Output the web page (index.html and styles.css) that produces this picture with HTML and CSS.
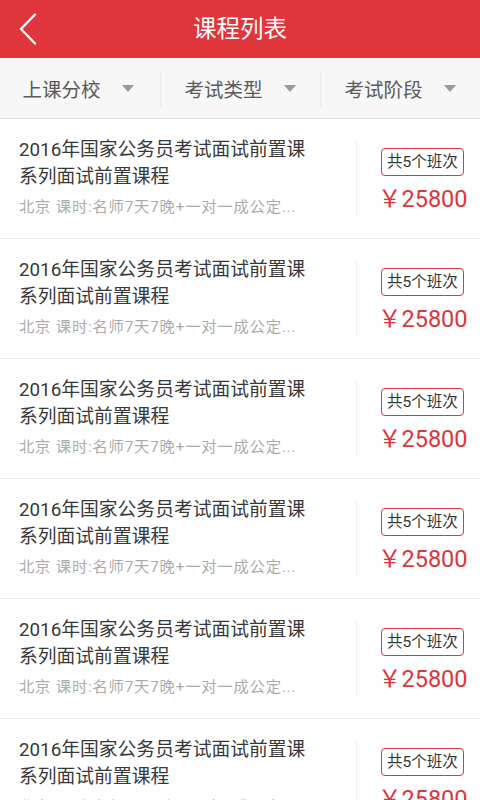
FILE: index.html
```html
<!DOCTYPE html>
<html lang="zh">
<head>
<meta charset="utf-8">
<link rel="stylesheet" href="styles.css">
</head>
<body>
<div class="app">
  <header class="topbar">
    <span class="back">
      <svg width="20" height="32" viewBox="0 0 20 32"><path d="M17 1.5 L3 16 L17 30.5" fill="none" stroke="#fff" stroke-width="2.4" stroke-linecap="round" stroke-linejoin="round"/></svg>
    </span>
    <h1 class="title">课程列表</h1>
  </header>
  <nav class="filters">
    <div class="filter first"><span>上课分校</span><i class="arrow"></i></div>
    <div class="filter"><span>考试类型</span><i class="arrow"></i></div>
    <div class="filter"><span>考试阶段</span><i class="arrow"></i></div>
  </nav>
  <ul class="list">
    <li class="item">
      <div class="info">
        <p class="name">2016年国家公务员考试面试前置课系列面试前置课程</p>
        <p class="desc">北京 课时:名师7天7晚+一对一成公定...</p>
      </div>
      <div class="side"><span class="badge">共5个班次</span><span class="price">￥25800</span></div>
    </li>
    <li class="item">
      <div class="info">
        <p class="name">2016年国家公务员考试面试前置课系列面试前置课程</p>
        <p class="desc">北京 课时:名师7天7晚+一对一成公定...</p>
      </div>
      <div class="side"><span class="badge">共5个班次</span><span class="price">￥25800</span></div>
    </li>
    <li class="item">
      <div class="info">
        <p class="name">2016年国家公务员考试面试前置课系列面试前置课程</p>
        <p class="desc">北京 课时:名师7天7晚+一对一成公定...</p>
      </div>
      <div class="side"><span class="badge">共5个班次</span><span class="price">￥25800</span></div>
    </li>
    <li class="item">
      <div class="info">
        <p class="name">2016年国家公务员考试面试前置课系列面试前置课程</p>
        <p class="desc">北京 课时:名师7天7晚+一对一成公定...</p>
      </div>
      <div class="side"><span class="badge">共5个班次</span><span class="price">￥25800</span></div>
    </li>
    <li class="item">
      <div class="info">
        <p class="name">2016年国家公务员考试面试前置课系列面试前置课程</p>
        <p class="desc">北京 课时:名师7天7晚+一对一成公定...</p>
      </div>
      <div class="side"><span class="badge">共5个班次</span><span class="price">￥25800</span></div>
    </li>
    <li class="item">
      <div class="info">
        <p class="name">2016年国家公务员考试面试前置课系列面试前置课程</p>
        <p class="desc">北京 课时:名师7天7晚+一对一成公定...</p>
      </div>
      <div class="side"><span class="badge">共5个班次</span><span class="price">￥25800</span></div>
    </li>
  </ul>
</div>
</body>
</html>
```
FILE: styles.css
```css
* { box-sizing: border-box; }
html, body { margin: 0; padding: 0; }
body {
  width: 480px;
  height: 800px;
  overflow: hidden;
  background: #fff;
  font-family: "Roboto", "Noto Sans CJK SC", "Noto Sans", sans-serif;
}
.app { width: 480px; }
.topbar {
  height: 58px;
  background: #e0353a;
  display: flex;
  align-items: center;
  justify-content: center;
  position: relative;
}
.back {
  position: absolute;
  left: 18px;
  top: 13px;
  width: 20px;
  height: 32px;
  display: flex;
}
.title {
  margin: 0;
  color: #fff;
  font-size: 23.5px;
  font-weight: normal;
  line-height: 58px;
}
.filters {
  height: 61px;
  background: #f7f7f7;
  border-bottom: 1px solid #e2e2e2;
  display: flex;
  align-items: center;
}
.filter {
  flex: 1 1 0;
  width: 0;
  height: 100%;
  display: flex;
  align-items: center;
  justify-content: center;
  gap: 21px;
  font-size: 19.5px;
  color: #5a5a5a;
  position: relative;
}
.filter.first span { margin-left: -4px; }
.filter + .filter::before {
  content: "";
  position: absolute;
  left: 0;
  top: 14px;
  bottom: 10px;
  width: 2px;
  background: linear-gradient(to right, #e6e6e6, #fafafa);
}
.arrow {
  width: 0;
  height: 0;
  border-left: 6px solid transparent;
  border-right: 6px solid transparent;
  border-top: 7px solid #9a9a9a;
}
.list { list-style: none; margin: 0; padding: 0; }
.item {
  height: 120px;
  border-bottom: 1px solid #efefef;
  display: flex;
  padding-left: 19px;
}
.info {
  flex: 1;
  padding-top: 18px;
  padding-right: 45px;
  min-width: 0;
}
.name {
  margin: 0;
  font-size: 18.8px;
  line-height: 27px;
  color: #383838;
}
.desc {
  margin: 6px 0 0;
  font-size: 15.3px;
  letter-spacing: 0.8px;
  line-height: 20px;
  color: #ababab;
  white-space: nowrap;
}
.side {
  width: 124px;
  flex: none;
  margin: 21px 0 22px;
  border-left: 1px solid #efefef;
  padding-left: 24px;
  padding-top: 8px;
  display: flex;
  flex-direction: column;
  align-items: flex-start;
}
.badge {
  height: 28px;
  border: 1px solid #d9383c;
  border-radius: 4px;
  padding: 0 5px;
  font-size: 15.5px;
  line-height: 26px;
  color: #333;
}
.price {
  margin-top: 8px;
  margin-left: -3px;
  font-size: 23.5px;
  line-height: 30px;
  color: #e0353a;
}
```
